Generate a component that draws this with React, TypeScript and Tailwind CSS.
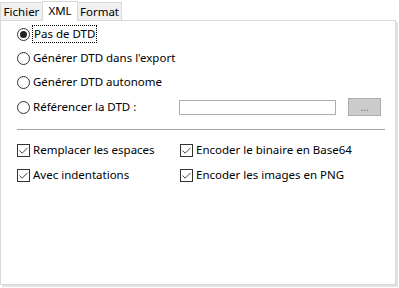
import React from "react";

const font = { fontFamily: '"Noto Sans", "Liberation Sans", sans-serif' };

function Radio({ checked }: { checked?: boolean }) {
  return (
    <span className="w-[13px] h-[13px] rounded-full border border-[#333333] bg-white flex items-center justify-center shrink-0">
      {checked && <span className="w-[7px] h-[7px] rounded-full bg-[#222222]" />}
    </span>
  );
}

function Check() {
  return (
    <span className="w-[13px] h-[13px] border border-[#333333] bg-white flex items-center justify-center shrink-0">
      <svg width="11" height="11" viewBox="0 0 11 11">
        <path d="M1.5 5.5 L4.2 8.2 L9.5 2.8" fill="none" stroke="#444" strokeWidth="1" />
      </svg>
    </span>
  );
}

export default function App() {
  return (
    <div className="w-[399px] h-[288px] bg-white text-[11.5px] text-black leading-none" style={font}>
      <div className="flex items-end h-[20px] relative">
        <div className="w-[43px] h-[18px] flex items-center justify-center bg-[#f0f0f0] border border-b-0 border-[#d9d9d9] mr-[-1px]">Fichier</div>
        <div className="w-[36px] h-[20px] flex items-center justify-center bg-white border border-b-0 border-[#d9d9d9] relative z-10 mb-[-1px] pb-px">XML</div>
        <div className="w-[45px] h-[18px] flex items-center justify-center bg-[#f0f0f0] border border-b-0 border-[#d9d9d9] ml-[-1px]">Format</div>
      </div>
      <div className="w-[396px] h-[265px] border border-[#d9d9d9] bg-white shadow-[2px_2px_0_#e3e3e3] pl-[16px] pr-[14px]">
        <div className="h-[24px] flex items-center gap-[2px] mt-[1px]">
          <Radio checked />
          <span className="border border-dotted border-black px-px py-[2px]">Pas de DTD</span>
        </div>
        <div className="h-[24px] flex items-center gap-[3px]">
          <Radio />
          <span>Générer DTD dans l'export</span>
        </div>
        <div className="h-[24px] flex items-center gap-[3px]">
          <Radio />
          <span>Générer DTD autonome</span>
        </div>
        <div className="h-[24px] flex items-center mt-[1px]">
          <div className="w-[163px] flex items-center gap-[3px]">
            <Radio />
            <span>Référencer la DTD :</span>
          </div>
          <div className="w-[158px] h-[15px] border border-[#adadad] bg-white" />
          <div className="w-[33px] h-[18px] ml-[12px] border border-[#adadad] bg-[#cccccc] flex items-center justify-center text-[#7a7a7a] text-[10px]">...</div>
        </div>
        <div className="mt-[10px] border-t border-[#a0a0a0] w-[368px]" />
        <div className="mt-[8px] h-[24px] flex items-center">
          <div className="w-[163px] flex items-center gap-[3px]">
            <Check />
            <span>Remplacer les espaces</span>
          </div>
          <div className="flex items-center gap-[3px]">
            <Check />
            <span>Encoder le binaire en Base64</span>
          </div>
        </div>
        <div className="mt-px h-[24px] flex items-center">
          <div className="w-[163px] flex items-center gap-[3px]">
            <Check />
            <span>Avec indentations</span>
          </div>
          <div className="flex items-center gap-[3px]">
            <Check />
            <span>Encoder les images en PNG</span>
          </div>
        </div>
      </div>
    </div>
  );
}
